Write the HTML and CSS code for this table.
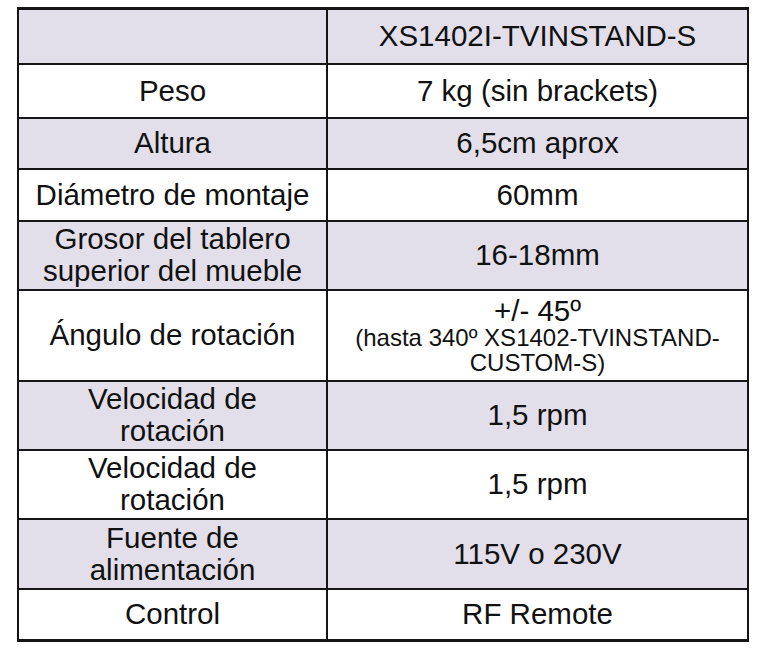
FILE: index.html
```html
<!DOCTYPE html>
<html lang="es">
<head>
<meta charset="utf-8">
<title>Especificaciones</title>
<link rel="stylesheet" href="styles.css">
</head>
<body>
<table class="spec">
  <colgroup><col class="c1"><col class="c2"></colgroup>
  <tr class="alt r-head"><td></td><td>XS1402I-TVINSTAND-S</td></tr>
  <tr class="r-54"><td>Peso</td><td>7 kg (sin brackets)</td></tr>
  <tr class="alt r-51"><td>Altura</td><td>6,5cm aprox</td></tr>
  <tr class="r-52"><td>Diámetro de montaje</td><td>60mm</td></tr>
  <tr class="alt r-69"><td>Grosor del tablero<br>superior del mueble</td><td>16-18mm</td></tr>
  <tr class="r-91"><td>Ángulo de rotación</td><td><div class="big">+/- 45º</div><div class="small">(hasta 340º XS1402-TVINSTAND-<br>CUSTOM-S)</div></td></tr>
  <tr class="alt r-69"><td>Velocidad de<br>rotación</td><td>1,5 rpm</td></tr>
  <tr class="r-69"><td>Velocidad de<br>rotación</td><td>1,5 rpm</td></tr>
  <tr class="alt r-70"><td>Fuente de<br>alimentación</td><td>115V o 230V</td></tr>
  <tr class="r-52 last"><td>Control</td><td>RF Remote</td></tr>
</table>
</body>
</html>
```
FILE: styles.css
```css
html, body {
  margin: 0;
  padding: 0;
  background: #ffffff;
}
body {
  padding: 7px 0 0 17px;
  font-family: "Liberation Sans", Arial, sans-serif;
  color: #111111;
}
.spec {
  border-collapse: collapse;
  width: 730px;
  table-layout: fixed;
}
.c1 { width: 309px; }
.c2 { width: 421px; }
.spec td {
  border: 2px solid #151515;
  text-align: center;
  vertical-align: middle;
  font-size: 29.5px;
  line-height: 32px;
  padding: 0 2px;
}
.spec tr.r-head td { border-top-width: 3px; }
.spec tr.last td { border-bottom-width: 3px; }
.alt td { background: #e2dfea; }
.r-head { height: 55px; }
.r-54 { height: 54px; }
.r-51 { height: 51px; }
.r-52 { height: 52px; }
.r-69 { height: 69px; }
.r-70 { height: 70px; }
.r-91 { height: 91px; }
.big {
  font-size: 29.5px;
  line-height: 29px;
}
.small {
  font-size: 24px;
  line-height: 25px;
}
```
